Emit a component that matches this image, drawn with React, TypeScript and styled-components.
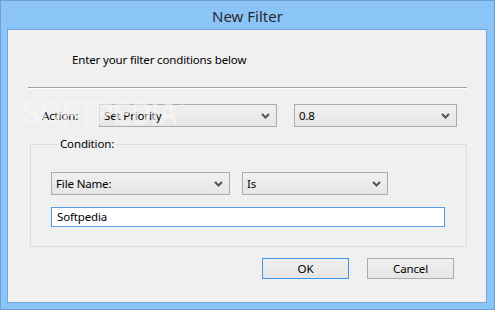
import React from "react";
import styled, { createGlobalStyle } from "styled-components";

const Global = createGlobalStyle`
  html, body { margin: 0; padding: 0; background: #8cc6f8; }
  body { font-family: "Noto Sans", "Open Sans", sans-serif; font-size: 11.5px; letter-spacing: -0.15px; color: #000; }
  * { box-sizing: border-box; }
`;

const Window = styled.div`
  position: relative;
  width: 495px;
  height: 310px;
  background: #8bc5f8;
  border: 1px solid #6d9fd6;
  display: flex;
  flex-direction: column;
  overflow: hidden;
`;

const TitleBar = styled.div`
  height: 28px;
  display: flex;
  align-items: center;
  justify-content: center;
  font-size: 15px;
  letter-spacing: 0;
  color: #2b2b2b;
  padding-top: 1px;
`;

const Client = styled.div`
  flex: 1;
  margin: 0 7px 6px 6px;
  background: #f0f0f0;
  border: 1px solid #6fa4dc;
  display: flex;
  flex-direction: column;
`;

const Instruction = styled.div`
  margin: 22px 0 0 64px;
  line-height: 16px;
`;

const Separator = styled.div`
  margin: 19px 19px 0 20px;
  height: 2px;
  border-top: 1px solid #a0a0a0;
  border-bottom: 1px solid #ffffff;
`;

const Row = styled.div<{ $top: number; $left: number }>`
  display: flex;
  align-items: center;
  margin: ${(p) => p.$top}px 0 0 ${(p) => p.$left}px;
`;

const Label = styled.span`
  width: 57px;
  line-height: 16px;
`;

const SelectBox = styled.div<{ $w: number; $ml?: number }>`
  width: ${(p) => p.$w}px;
  height: 23px;
  margin-left: ${(p) => p.$ml ?? 0}px;
  border: 1px solid #acacac;
  background: linear-gradient(#f0f0f0, #e6e6e6);
  display: flex;
  align-items: center;
  padding: 0 6px 0 4px;
  justify-content: space-between;
`;

const SelectText = styled.span`
  line-height: 16px;
`;

const Chevron = () => (
  <svg width="9" height="6" viewBox="0 0 9 6">
    <polyline points="1,1 4.5,4.5 8,1" fill="none" stroke="#555" strokeWidth="2" />
  </svg>
);

const Select = ({ value, w, ml }: { value: string; w: number; ml?: number }) => (
  <SelectBox $w={w} $ml={ml}>
    <SelectText>{value}</SelectText>
    <Chevron />
  </SelectBox>
);

const Group = styled.fieldset`
  margin: 9px 0 0 22px;
  width: 437px;
  border: 1px solid #dcdcdc;
  padding: 20px 0 19px 20px;
  min-width: 0;
`;

const Legend = styled.legend`
  padding: 0 2px;
  margin-left: 7px;
  line-height: 16px;
`;

const TextInput = styled.div`
  margin-top: 12px;
  width: 394px;
  height: 20px;
  border: 1px solid #569de5;
  background: #fff;
  padding: 0 5px;
  display: flex;
  align-items: center;
  line-height: 16px;
`;

const Buttons = styled.div`
  display: flex;
  gap: 18px;
  margin: 11px 0 0 254px;
`;

const Button = styled.div<{ $default?: boolean }>`
  width: 87px;
  height: 21px;
  border: 1px solid ${(p) => (p.$default ? "#3c96f2" : "#acacac")};
  background: linear-gradient(#f0f0f0, #e5e5e5);
  display: flex;
  align-items: center;
  justify-content: center;
  line-height: 16px;
`;

const Watermark = styled.div`
  position: absolute;
  left: 21px;
  top: 94px;
  font-family: "Liberation Sans", Arial, sans-serif;
  font-weight: bold;
  font-size: 35px;
  line-height: 36px;
  letter-spacing: 0;
  color: rgba(255, 255, 255, 0.6);
  text-shadow: 0 0 1px rgba(0, 0, 0, 0.05);
  transform: scaleX(0.78);
  transform-origin: left top;
  pointer-events: none;
  white-space: nowrap;
  sup { font-size: 10px; line-height: 10px; vertical-align: 20px; margin-left: 2px; }
`;

export default function App() {
  return (
    <>
      <Global />
      <Window>
        <TitleBar>New Filter</TitleBar>
        <Client>
          <Instruction>Enter your filter conditions below</Instruction>
          <Separator />
          <Row $top={15} $left={34}>
            <Label>Action:</Label>
            <Select value="Set Priority" w={178} />
            <Select value="0.8" w={163} ml={17} />
          </Row>
          <Group>
            <Legend>Condition:</Legend>
            <Row $top={0} $left={0}>
              <Select value="File Name:" w={179} />
              <Select value="Is" w={146} ml={12} />
            </Row>
            <TextInput>Softpedia</TextInput>
          </Group>
          <Buttons>
            <Button $default>OK</Button>
            <Button>Cancel</Button>
          </Buttons>
        </Client>
        <Watermark>
          SOFTPEDIA<sup>®</sup>
        </Watermark>
      </Window>
    </>
  );
}
